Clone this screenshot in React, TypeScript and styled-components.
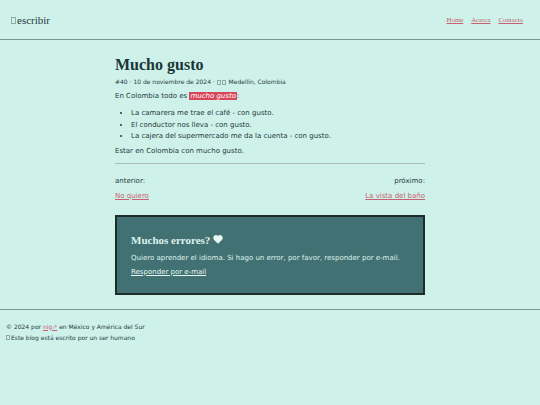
import styled, { createGlobalStyle } from 'styled-components';

const GlobalStyle = createGlobalStyle`
  html, body {
    margin: 0;
    padding: 0;
    background: #cef1ea;
  }
  body {
    font-family: 'DejaVu Sans', Verdana, sans-serif;
    color: #1f3b3d;
    font-size: 7px;
  }
`;

const App: React.FC = () => {
  return (
    <>
      <GlobalStyle />
      <Page>
        <Header>
          <Logo>
            <Tofu />
            escribir
          </Logo>
          <Nav>
            <NavLink href="#">Home</NavLink>
            <NavLink href="#">Acerca</NavLink>
            <NavLink href="#">Contacto</NavLink>
          </Nav>
        </Header>
        <Main>
          <Title>Mucho gusto</Title>
          <Meta>
            #40 · 10 de noviembre de 2024 · <Tofu $small />
            <Tofu $small /> Medellín, Colombia
          </Meta>
          <Text>
            En Colombia todo es <Mark>mucho gusto</Mark>:
          </Text>
          <List>
            <li>La camarera me trae el café - con gusto.</li>
            <li>El conductor nos lleva - con gusto.</li>
            <li>La cajera del supermercado me da la cuenta - con gusto.</li>
          </List>
          <Text>Estar en Colombia con mucho gusto.</Text>
          <Rule />
          <PostNav>
            <PostNavCol>
              <span>anterior:</span>
              <PinkLink href="#">No quiero</PinkLink>
            </PostNavCol>
            <PostNavCol $right>
              <span>próximo:</span>
              <PinkLink href="#">La vista del baño</PinkLink>
            </PostNavCol>
          </PostNav>
          <ErrorBox>
            <BoxTitle>
              Muchos errores?
              <svg width="10" height="9" viewBox="0 0 24 22">
                <path
                  d="M12 21.5 2.6 12.3C-.3 9.4-.3 4.8 2.6 2.1 5.3-.5 9.6-.3 12 2.6c2.4-2.9 6.7-3.1 9.4-.5 2.9 2.7 2.9 7.3 0 10.2z"
                  fill="#e8f6f2"
                />
              </svg>
            </BoxTitle>
            <BoxText>
              Quiero aprender el idioma. Si hago un error, por favor, responder por e-mail.
            </BoxText>
            <BoxLink href="#">Responder por e-mail</BoxLink>
          </ErrorBox>
        </Main>
        <Footer>
          <FootLine>
            © 2024 por <PinkLink href="#">nig↗</PinkLink> en México y América del Sur
          </FootLine>
          <FootLine>
            <Tofu $small />
            Este blog está escrito por un ser humano
          </FootLine>
        </Footer>
      </Page>
    </>
  );
};

export default App;

const Page = styled.div`
  min-height: 405px;
  display: flex;
  flex-direction: column;
`;

const Header = styled.header`
  height: 39px;
  display: flex;
  align-items: center;
  justify-content: space-between;
  padding: 0 17px 0 11px;
  border-bottom: 1px solid #7b968d;
`;

// missing-glyph box, as the emoji shows in the reference
const Tofu = styled.span<{ $small?: boolean }>`
  display: inline-block;
  box-sizing: border-box;
  width: ${p => (p.$small ? '4px' : '5px')};
  height: ${p => (p.$small ? '5px' : '7px')};
  border: 0.6px solid #8fa9a3;
  margin-right: 1px;
  vertical-align: ${p => (p.$small ? '-0.5px' : '0')};
`;

const Logo = styled.div`
  font-family: 'Liberation Serif', 'Times New Roman', serif;
  font-size: 11px;
  color: #1f3b3d;
`;

const Nav = styled.nav`
  display: flex;
  gap: 8px;
`;

const NavLink = styled.a`
  font-family: 'Liberation Serif', 'Times New Roman', serif;
  font-size: 6.8px;
  color: #c8616f;
`;

const Main = styled.main`
  width: 310px;
  margin: 0 auto;
  padding-top: 16px;
`;

const Title = styled.h1`
  font-family: 'Liberation Serif', 'Times New Roman', serif;
  font-size: 16px;
  font-weight: bold;
  margin: 0 0 4px;
  color: #1b3537;
`;

const Meta = styled.div`
  font-size: 6px;
  margin-bottom: 6px;
`;

const Text = styled.p`
  margin: 0 0 6px;
  line-height: 11px;
`;

const Mark = styled.mark`
  background: #d9465a;
  color: #fff;
  font-style: italic;
  padding: 0 1px;
`;

const List = styled.ul`
  margin: 0 0 3px;
  padding-left: 16px;
  line-height: 11.5px;
`;

const Rule = styled.hr`
  border: 0;
  border-top: 1px solid #a9bcb5;
  margin: 5px 0 13px;
`;

const PostNav = styled.div`
  display: flex;
  justify-content: space-between;
  margin-bottom: 15px;
`;

const PostNavCol = styled.div<{ $right?: boolean }>`
  display: flex;
  flex-direction: column;
  gap: 7px;
  align-items: ${p => (p.$right ? 'flex-end' : 'flex-start')};
`;

const PinkLink = styled.a`
  color: #c8616f;
`;

const ErrorBox = styled.section`
  background: #417173;
  border: 2px solid #1e2b26;
  padding: 17px 14px 17px;
  color: #dff2ee;
`;

const BoxTitle = styled.h2`
  font-family: 'Liberation Serif', 'Times New Roman', serif;
  font-size: 11px;
  font-weight: bold;
  margin: 0 0 8px;
  display: flex;
  align-items: center;
  gap: 3px;
`;

const BoxText = styled.p`
  margin: 0 0 6px;
`;

const BoxLink = styled.a`
  color: #e8f6f2;
`;

const Footer = styled.footer`
  margin-top: 14px;
  border-top: 1px solid #7b968d;
  padding: 13px 6px;
  font-size: 6px;
`;

const FootLine = styled.div`
  margin-bottom: 4px;
`;
